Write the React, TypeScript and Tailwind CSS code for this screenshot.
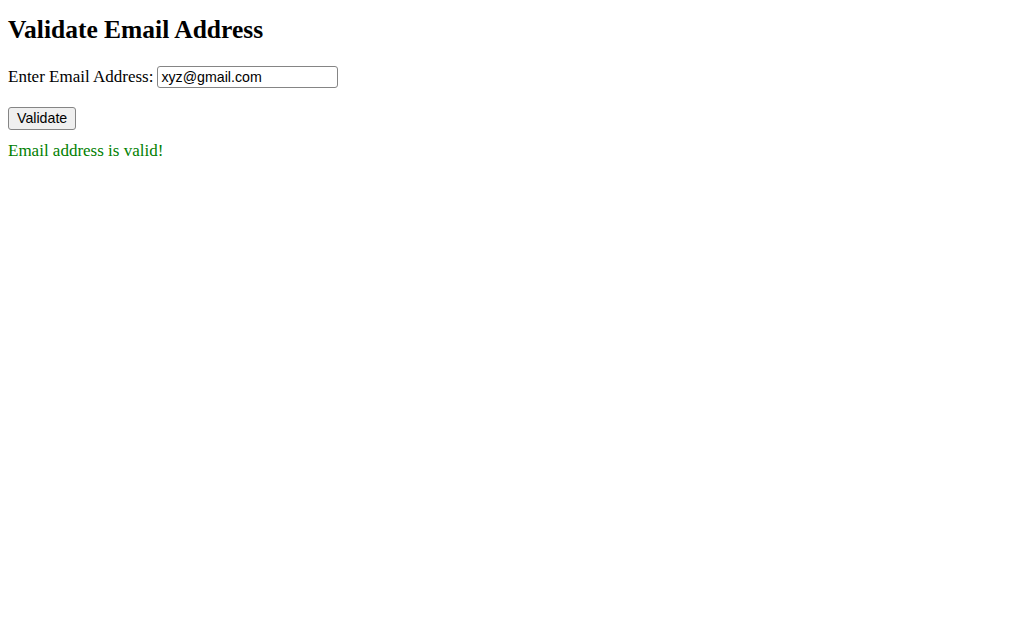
import { useState } from "react";

const App = () => {
  const [email, setEmail] = useState("xyz@gmail.com");
  const [valid, setValid] = useState<boolean | null>(true);

  const validate = () => {
    setValid(/^[^\s@]+@[^\s@]+\.[^\s@]+$/.test(email));
  };

  return (
    <div className="px-2 pt-[15px] font-['Liberation_Serif',serif] text-[17px] leading-[20px] text-black">
      <h2 className="text-[25.5px] leading-[29px] font-bold">
        Validate Email Address
      </h2>
      <div className="mt-[22px] flex items-center gap-[4px]">
        <label htmlFor="email">Enter Email Address:</label>
        <input
          id="email"
          type="text"
          value={email}
          onChange={(e) => setEmail(e.target.value)}
          className="h-[22px] w-[181px] rounded-[3px] border border-[#858585] px-[3px] font-['Liberation_Sans',sans-serif] text-[14.2px] leading-normal outline-none"
        />
      </div>
      <button
        onClick={validate}
        className="mt-[19px] block h-[23px] rounded-[3px] border border-[#858585] bg-[#efefef] px-[8px] font-['Liberation_Sans',sans-serif] text-[14.2px] leading-normal"
      >
        Validate
      </button>
      {valid !== null && (
        <p className={valid ? "mt-[11px] text-[green]" : "mt-[11px] text-[red]"}>
          {valid ? "Email address is valid!" : "Email address is invalid!"}
        </p>
      )}
    </div>
  );
};

export default App;
